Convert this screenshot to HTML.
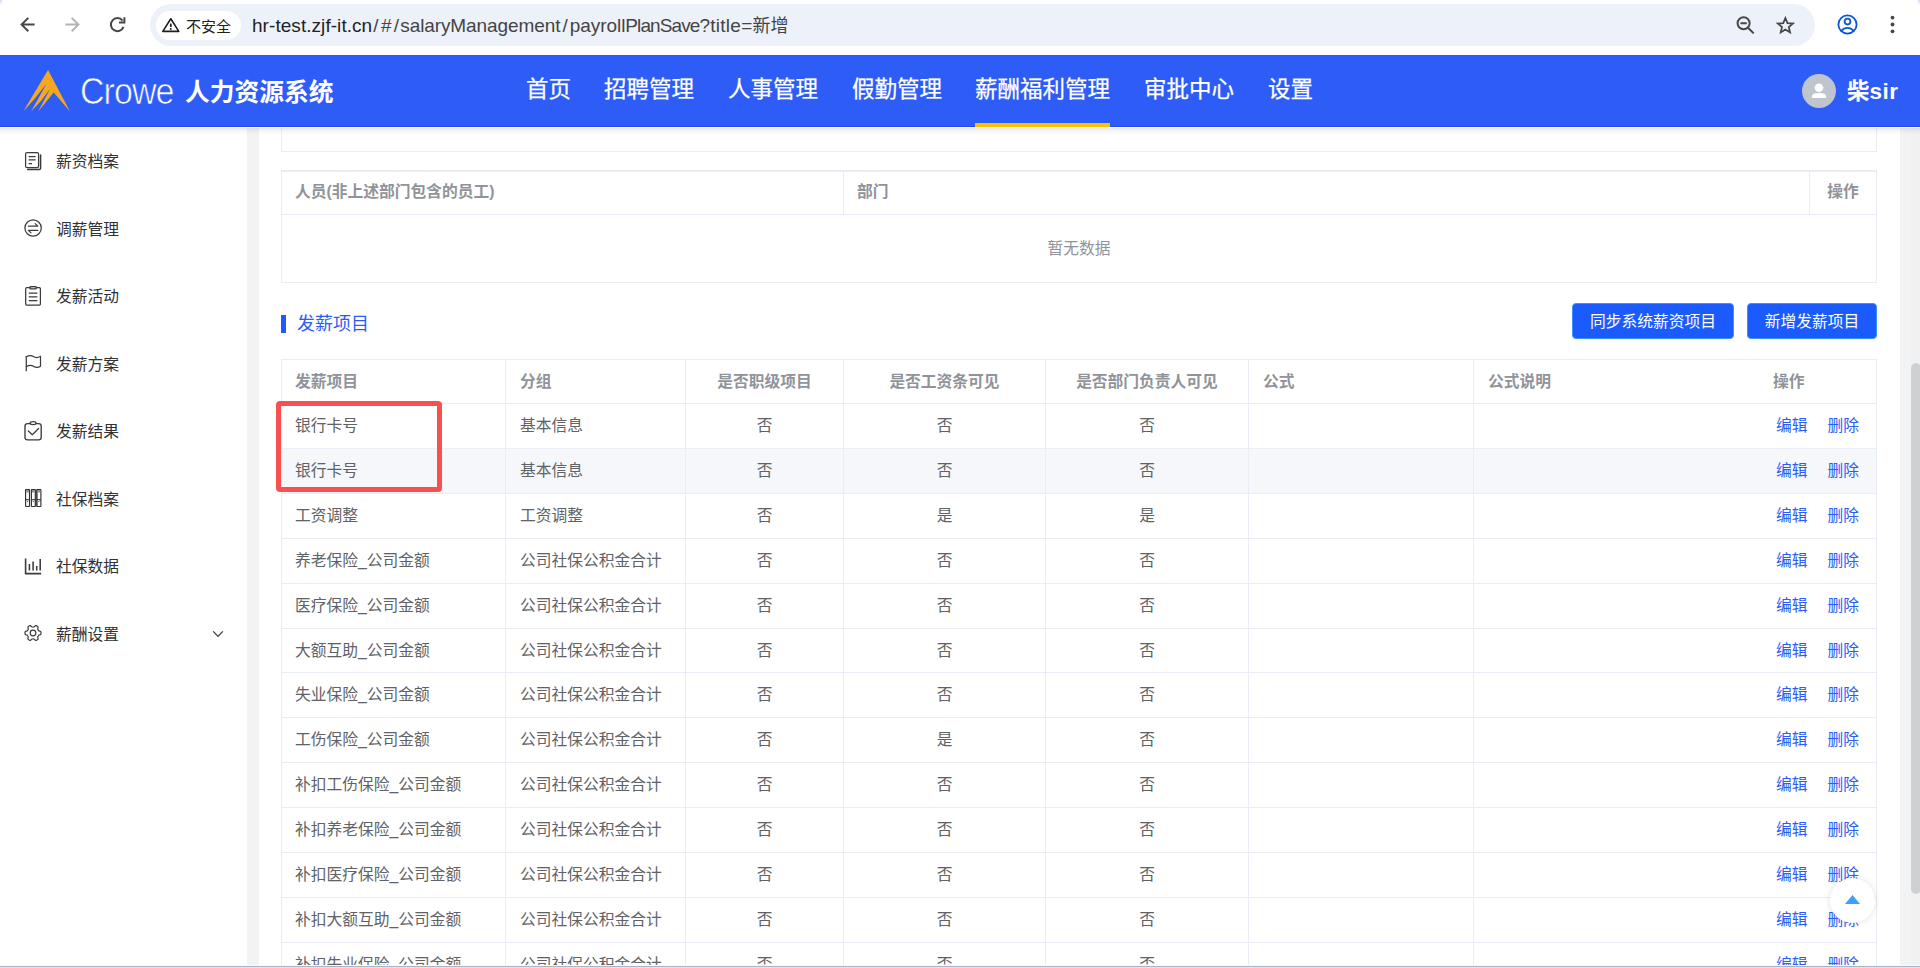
<!DOCTYPE html>
<html lang="zh-CN">
<head>
<meta charset="utf-8">
<title>人力资源系统</title>
<style>
*{box-sizing:border-box;margin:0;padding:0}
html,body{width:1920px;height:968px;overflow:hidden;background:#fff}
body{font-family:"Liberation Sans","Noto Sans CJK SC",sans-serif;position:relative;color:#606266;-webkit-font-smoothing:antialiased}
.abs{position:absolute}
svg{position:absolute;overflow:visible}
/* ---------- browser chrome ---------- */
#chrome{position:absolute;left:0;top:0;width:1920px;height:55px;background:#fff}
.cn{position:absolute;top:0;width:2px;height:5px;background:linear-gradient(#cfe0fc,#dbe8fd 45%,#fff)}
#pill{position:absolute;left:150px;top:4px;width:1665px;height:42px;border-radius:21px;background:#edf2fa}
#chip{position:absolute;left:156px;top:11px;width:85px;height:29px;border-radius:15px;background:#fff}
#chiptxt{position:absolute;left:186px;top:16px;font-size:15px;line-height:22px;color:#1f1f1f;white-space:nowrap}
#url{position:absolute;left:252px;top:13px;font-size:19px;line-height:26px;color:#1f1f1f;white-space:nowrap;letter-spacing:0}
#url i{font-style:normal;color:#444}
#url b{font-weight:400;font-size:18px;letter-spacing:0;color:#444}
/* ---------- app header ---------- */
#hdr{position:absolute;left:0;top:55px;width:1920px;height:72px;background:#2e5cf6;border-bottom:1px solid #2447f2;z-index:5}
#tshadow{position:absolute;left:0;top:127px;width:1920px;height:8px;border-top:1px solid #fffefa;background:linear-gradient(to bottom,rgba(0,0,0,.078),rgba(0,0,0,.03) 50%,rgba(0,0,0,0));z-index:6;pointer-events:none}
#crowe{position:absolute;left:80px;top:17px;font-size:36px;line-height:40px;color:#fff;white-space:nowrap;transform-origin:0 50%;transform:scaleX(.945);letter-spacing:-1px;-webkit-text-stroke:.7px #2e5cf6}
#sys{position:absolute;left:185px;top:19.5px;font-size:24.75px;line-height:36px;font-weight:700;color:#fff;white-space:nowrap}
.nav{position:absolute;top:18px;font-size:22.5px;line-height:34px;color:#fff;white-space:nowrap;-webkit-text-stroke:.25px #fff}
#navline{position:absolute;left:975px;top:68px;width:135px;height:4px;background:#fdc100}
#avatar{position:absolute;left:1802px;top:19px;width:34px;height:34px;border-radius:50%;background:#c0c4cc}
#uname{position:absolute;left:1847px;top:20px;font-size:22.5px;line-height:34px;font-weight:700;color:#fff;white-space:nowrap}
/* ---------- body layout ---------- */
#side{position:absolute;left:0;top:127px;width:247px;height:839px;background:#fff}
#gapl{position:absolute;left:247px;top:127px;width:12px;height:839px;background:#f2f3f5}
#gapr{position:absolute;left:1900px;top:127px;width:11px;height:839px;background:#f2f3f5}
#sbar{position:absolute;left:1911px;top:127px;width:9px;height:839px;background:#f1f1f1}
#thumb{position:absolute;left:0;top:236px;width:10px;height:531px;border-radius:5px;background:#cfd0d2}
#botline{position:absolute;left:0;top:965px;width:1920px;height:3px;background:#e0e3f3;border-top:1px solid #fbfbfc;z-index:9}
#botline:before{content:"";position:absolute;left:0;top:0;width:1920px;height:1px;background:#b1b2bf}
/* ---------- content ---------- */
#content{position:absolute;left:0;top:0;width:1900px;height:966px;overflow:hidden}
#box0{position:absolute;left:281px;top:100px;width:1596px;height:52px;border:1px solid #eaedf5}
table{position:absolute;border-collapse:separate;border-spacing:0;table-layout:fixed;font-size:15.75px}
#t1{left:281px;top:170px;width:1596px;border-left:1px solid #eaedf5;border-top:2px solid #e8ebf5}
#t2{left:281px;top:359px;width:1596px;border-left:1px solid #eaedf5;border-top:1px solid #eaedf5}
th,td{border-right:1px solid #eaedf5;border-bottom:1px solid #eaedf5;padding:0 0 0 13px;text-align:left;white-space:nowrap;overflow:hidden;vertical-align:middle}
th{font-weight:700;color:#909399;height:44px;line-height:43px}
#t1 th{height:43px;line-height:38px;padding-bottom:2px}
td{color:#606266;height:45px;line-height:44px;font-weight:400}
th.c,td.c{text-align:center;padding:0}
th.nb,td.nb{border-right:none}
#t2 th:nth-child(2),#t2 td:nth-child(2),#t2 th:nth-child(6),#t2 th:nth-child(7){padding-left:14px}
td.empty{height:68px;line-height:66px;text-align:center;color:#909399;padding:0}
tr.hov td{background:#f5f7fa}
tr.s44 td{height:44px;line-height:43px}
th.op{padding-left:12px}
td.op{padding-left:15px}
.lk{color:#2d5bf5}
.l2{margin-left:20px}
#bar{position:absolute;left:281px;top:315px;width:5px;height:18px;background:#1e5aff}
#stitle{position:absolute;left:297px;top:310px;font-size:18px;line-height:28px;color:#2d5bf5;white-space:nowrap}
.btn{position:absolute;top:303px;height:36px;border-radius:4px;background:#1b5bfd;border:1px solid #3d90ff;color:#fff;font-size:15.75px;line-height:35px;text-align:center;white-space:nowrap}
#redbox{position:absolute;left:276px;top:401px;width:166px;height:91px;border:5px solid #f85050;border-radius:4px}
#totop{position:absolute;left:1830px;top:877.5px;width:45px;height:45px;border-radius:50%;background:#fff;box-shadow:0 0 7px rgba(0,0,0,.12)}
.mi{position:absolute;left:56px;font-size:15.75px;line-height:24px;color:#303133;white-space:nowrap}
</style>
</head>
<body>
<!-- browser chrome -->
<div id="chrome">
  <div class="cn" style="left:0"></div><div class="cn" style="left:1918px"></div>
  <div id="pill"></div>
  <div id="chip"></div>
  <div id="chiptxt">不安全</div>
  <div id="url"><span style="letter-spacing:.055px">hr-test.zjf-it.cn</span><i style="letter-spacing:2.325px;padding-left:1.1px;margin-right:-1.1px">/#/</i><i style="letter-spacing:-0.115px">salary</i><i style="letter-spacing:-0.091px">Management</i><i style="padding:0 2.06px">/</i><i style="letter-spacing:-0.055px">payroll</i><i style="letter-spacing:-0.905px">PlanSave</i><i style="letter-spacing:0.267px">?title=</i><b>新增</b></div>
</div>

<!-- app header -->
<div id="hdr">
  <div id="crowe">Crowe</div>
  <div id="sys">人力资源系统</div>
  <div class="nav" style="left:526px">首页</div>
  <div class="nav" style="left:604px">招聘管理</div>
  <div class="nav" style="left:728px">人事管理</div>
  <div class="nav" style="left:852px">假勤管理</div>
  <div class="nav" style="left:975px">薪酬福利管理</div>
  <div class="nav" style="left:1144px">审批中心</div>
  <div class="nav" style="left:1268px">设置</div>
  <div id="navline"></div>
  <div id="avatar"></div>
  <div id="uname">柴<span style="letter-spacing:.5px">sir</span></div>
</div>

<!-- sidebar -->
<div id="side">
  <div class="mi" style="top:23px">薪资档案</div>
  <div class="mi" style="top:91px">调薪管理</div>
  <div class="mi" style="top:158px">发薪活动</div>
  <div class="mi" style="top:226px">发薪方案</div>
  <div class="mi" style="top:293px">发薪结果</div>
  <div class="mi" style="top:361px">社保档案</div>
  <div class="mi" style="top:428px">社保数据</div>
  <div class="mi" style="top:496px">薪酬设置</div>
</div>
<div id="gapl"></div>
<div id="gapr"></div>
<div id="sbar"><div id="thumb"></div></div>

<div id="tshadow"></div>
<!-- content -->
<div id="content">
<div id="box0"></div>
<table id="t1" cellspacing="0" cellpadding="0">
<colgroup><col style="width:562px"><col style="width:966px"><col style="width:67px"></colgroup>
<thead><tr><th>人员(非上述部门包含的员工)</th><th>部门</th><th class="c">操作</th></tr></thead>
<tbody><tr><td colspan="3" class="empty">暂无数据</td></tr></tbody>
</table>
<div id="bar"></div><div id="stitle">发薪项目</div>
<div class="btn" style="left:1572px;width:162px">同步系统薪资项目</div>
<div class="btn" style="left:1747px;width:130px">新增发薪项目</div>
<table id="t2" cellspacing="0" cellpadding="0">
<colgroup><col style="width:224px"><col style="width:180px"><col style="width:158px"><col style="width:202px"><col style="width:203px"><col style="width:225px"><col style="width:287px"><col style="width:116px"></colgroup>
<thead><tr><th>发薪项目</th><th>分组</th><th class="c">是否职级项目</th><th class="c">是否工资条可见</th><th class="c">是否部门负责人可见</th><th>公式</th><th class="nb">公式说明</th><th class="op">操作</th></tr></thead>
<tbody>
<tr><td>银行卡号</td><td>基本信息</td><td class="c">否</td><td class="c">否</td><td class="c">否</td><td></td><td class="nb"></td><td class="op"><span class="lk">编辑</span><span class="lk l2">删除</span></td></tr>
<tr class="hov"><td>银行卡号</td><td>基本信息</td><td class="c">否</td><td class="c">否</td><td class="c">否</td><td></td><td class="nb"></td><td class="op"><span class="lk">编辑</span><span class="lk l2">删除</span></td></tr>
<tr><td>工资调整</td><td>工资调整</td><td class="c">否</td><td class="c">是</td><td class="c">是</td><td></td><td class="nb"></td><td class="op"><span class="lk">编辑</span><span class="lk l2">删除</span></td></tr>
<tr><td>养老保险_公司金额</td><td>公司社保公积金合计</td><td class="c">否</td><td class="c">否</td><td class="c">否</td><td></td><td class="nb"></td><td class="op"><span class="lk">编辑</span><span class="lk l2">删除</span></td></tr>
<tr><td>医疗保险_公司金额</td><td>公司社保公积金合计</td><td class="c">否</td><td class="c">否</td><td class="c">否</td><td></td><td class="nb"></td><td class="op"><span class="lk">编辑</span><span class="lk l2">删除</span></td></tr>
<tr class="s44"><td>大额互助_公司金额</td><td>公司社保公积金合计</td><td class="c">否</td><td class="c">否</td><td class="c">否</td><td></td><td class="nb"></td><td class="op"><span class="lk">编辑</span><span class="lk l2">删除</span></td></tr>
<tr><td>失业保险_公司金额</td><td>公司社保公积金合计</td><td class="c">否</td><td class="c">否</td><td class="c">否</td><td></td><td class="nb"></td><td class="op"><span class="lk">编辑</span><span class="lk l2">删除</span></td></tr>
<tr><td>工伤保险_公司金额</td><td>公司社保公积金合计</td><td class="c">否</td><td class="c">是</td><td class="c">否</td><td></td><td class="nb"></td><td class="op"><span class="lk">编辑</span><span class="lk l2">删除</span></td></tr>
<tr><td>补扣工伤保险_公司金额</td><td>公司社保公积金合计</td><td class="c">否</td><td class="c">否</td><td class="c">否</td><td></td><td class="nb"></td><td class="op"><span class="lk">编辑</span><span class="lk l2">删除</span></td></tr>
<tr><td>补扣养老保险_公司金额</td><td>公司社保公积金合计</td><td class="c">否</td><td class="c">否</td><td class="c">否</td><td></td><td class="nb"></td><td class="op"><span class="lk">编辑</span><span class="lk l2">删除</span></td></tr>
<tr><td>补扣医疗保险_公司金额</td><td>公司社保公积金合计</td><td class="c">否</td><td class="c">否</td><td class="c">否</td><td></td><td class="nb"></td><td class="op"><span class="lk">编辑</span><span class="lk l2">删除</span></td></tr>
<tr><td>补扣大额互助_公司金额</td><td>公司社保公积金合计</td><td class="c">否</td><td class="c">否</td><td class="c">否</td><td></td><td class="nb"></td><td class="op"><span class="lk">编辑</span><span class="lk l2">删除</span></td></tr>
<tr><td>补扣失业保险_公司金额</td><td>公司社保公积金合计</td><td class="c">否</td><td class="c">否</td><td class="c">否</td><td></td><td class="nb"></td><td class="op"><span class="lk">编辑</span><span class="lk l2">删除</span></td></tr>
</tbody></table>
<div id="redbox"></div>
<div id="totop"><svg width="15" height="9" viewBox="0 0 15 9" style="left:15px;top:17.4px"><path d="M7.5 0L15 9H0z" fill="#409eff"/></svg></div>
</div>

<svg id="icons" width="1920" height="968" viewBox="0 0 1920 968" style="left:0;top:0;z-index:8;pointer-events:none" fill="none" stroke-linecap="round" stroke-linejoin="round">
<g stroke="#474747" stroke-width="2" stroke-linecap="butt" stroke-linejoin="miter">
<path d="M34.6 24.6H22.4M28.3 17.9L21.6 24.6l6.7 6.7"/>
</g>
<g stroke="#b4b4b4" stroke-width="2" stroke-linecap="butt" stroke-linejoin="miter">
<path d="M65.4 24.6H77.6M71.7 17.9L78.4 24.6l-6.7 6.7"/>
</g>
<g stroke="#474747" stroke-width="2" stroke-linecap="butt" stroke-linejoin="miter">
<path d="M122.52 20.60A6.5 6.5 0 1 0 123.51 26.82"/>
<path d="M124.4 17.2V22.6H119"/>
</g>
<path d="M170.8 18.8L178.8 31.4H162.8Z" stroke="#1f1f1f" stroke-width="1.6" stroke-linejoin="round"/>
<path d="M170.8 23.6v3.4" stroke="#1f1f1f" stroke-width="1.7" stroke-linecap="butt"/><circle cx="170.8" cy="29" r="0.95" fill="#1f1f1f"/>
<g stroke="#474747" stroke-width="2" stroke-linecap="butt">
<circle cx="1743.6" cy="23.3" r="6"/><path d="M1740.4 23.3h6.4M1748 27.7l5.7 5.7"/>
</g>
<path d="M1785.40 18.00L1787.52 23.09L1793.01 23.53L1788.82 27.11L1790.10 32.47L1785.40 29.60L1780.70 32.47L1781.98 27.11L1777.79 23.53L1783.28 23.09Z" stroke="#474747" stroke-width="1.75" stroke-linejoin="miter"/>
<g stroke="#0b57d0" stroke-width="1.8">
<circle cx="1847.5" cy="24.5" r="9.1"/><circle cx="1847.5" cy="21.6" r="2.9"/>
<path d="M1841.3 31.1C1843 28.6 1845.2 27.9 1847.5 27.9S1852 28.6 1853.7 31.1"/>
</g>
<circle cx="1892.5" cy="17.6" r="1.9" fill="#474747"/>
<circle cx="1892.5" cy="24.5" r="1.9" fill="#474747"/>
<circle cx="1892.5" cy="31.3" r="1.9" fill="#474747"/>
<path d="M48.05 69.9L23.2 111.5Q35.9 98.3 46.5 83.7L31.1 111.5Q42 101 50.2 88.8L38.2 111.5L53.7 92.6L70 111.5Z" fill="#f5a81e"/>
<circle cx="1819" cy="87.8" r="4.3" fill="#fff"/><path d="M1811.9 98.1v-1.6Q1811.9 93.1 1819 93.1T1826.1 96.5v1.6z" fill="#fff"/>
<g stroke="#3a3b3d" stroke-width="1.25">
<rect x="25.6" y="152.6" width="13" height="15" rx="1.6"/>
<path d="M40.6 155v13.2q0 1.4-1.4 1.4H27.6" stroke-width="1.5"/>
<path d="M28.6 156.6h7M28.6 159.8h7M28.6 163.5h3.4" stroke-linecap="butt"/>
<circle cx="33.1" cy="228" r="8.2"/>
<path d="M28.4 226.2h9.4l-2.6-2.6M37.8 230.3h-9.4l2.6 2.6" stroke-width="1.2"/>
<rect x="25.7" y="287.7" width="14.7" height="17.3" rx="1"/>
<rect x="30" y="286.7" width="6.2" height="2.2" rx=".5" fill="#d8d8d9"/>
<path d="M28.8 293.1h8.6M28.8 296.8h8.6M28.8 300.5h8.6" stroke-linecap="butt"/>
<path d="M26.3 356v15.2" stroke-linecap="butt"/>
<path d="M26.3 356.8C29 355.2 31.6 355.4 33.4 356.6S38 357.8 40.5 356.3V366.2C38 367.8 35.2 367.4 33.4 366.2S29 365 26.3 366.6"/>
<rect x="25" y="423.6" width="16.2" height="16.3" rx="2.6" stroke-width="1.35"/>
<ellipse cx="33.1" cy="423.1" rx="3" ry="1.6" fill="#fff"/>
<path d="M28.3 431l4 3.7 6.3-6.2"/>
<rect x="35.3" y="489.4" width="1.9" height="17.2" fill="#6e6f72" stroke="none"/>
<rect x="25.6" y="489.6" width="3.9" height="16.9" rx=".5" stroke="#2f3033" stroke-width="1.15" fill="#fff"/>
<rect x="26.2" y="490.2" width="2.7" height="2.3" fill="#8f9093" stroke="none"/>
<path d="M25.6 499.7h3.9" stroke="#2f3033" stroke-width="1.1" stroke-linecap="butt"/>
<circle cx="27.55" cy="501.6" r=".6" fill="#4a4b4e" stroke="none"/>
<rect x="31.4" y="489.6" width="3.9" height="16.9" rx=".5" stroke="#2f3033" stroke-width="1.15" fill="#fff"/>
<rect x="32.0" y="490.2" width="2.7" height="2.3" fill="#8f9093" stroke="none"/>
<path d="M31.4 499.7h3.9" stroke="#2f3033" stroke-width="1.1" stroke-linecap="butt"/>
<circle cx="33.35" cy="501.6" r=".6" fill="#4a4b4e" stroke="none"/>
<rect x="37.0" y="489.6" width="3.9" height="16.9" rx=".5" stroke="#2f3033" stroke-width="1.15" fill="#fff"/>
<rect x="37.6" y="490.2" width="2.7" height="2.3" fill="#8f9093" stroke="none"/>
<path d="M37.0 499.7h3.9" stroke="#2f3033" stroke-width="1.1" stroke-linecap="butt"/>
<circle cx="38.95" cy="501.6" r=".6" fill="#4a4b4e" stroke="none"/>
<path d="M25.6 558.4v15.2h15.6" stroke-linecap="butt" stroke-linejoin="miter" stroke-width="1.6"/>
<path d="M29.4 564v6.6M33.1 561.5v9.1M36.7 566v4.6M40.2 559v11.6" stroke-linecap="butt" stroke-width="1.55"/>
<path d="M41.00 633.00L40.99 633.35L40.97 633.70L40.93 634.04L40.73 634.36L40.26 634.61L39.76 634.81L39.26 634.97L38.78 635.10L38.54 635.30L38.44 635.54L38.32 635.77L38.20 636.00L38.06 636.22L37.91 636.44L37.76 636.65L37.71 636.95L37.84 637.43L37.95 637.95L38.03 638.49L38.05 639.01L37.87 639.35L37.59 639.55L37.30 639.75L37.00 639.93L36.69 640.10L36.38 640.25L36.06 640.39L35.68 640.38L35.24 640.10L34.81 639.76L34.42 639.40L34.07 639.06L33.78 638.95L33.52 638.98L33.26 638.99L33.00 639.00L32.74 638.99L32.48 638.98L32.22 638.95L31.93 639.06L31.58 639.40L31.19 639.76L30.76 640.10L30.32 640.38L29.94 640.39L29.62 640.25L29.31 640.10L29.00 639.93L28.70 639.75L28.41 639.55L28.13 639.35L27.95 639.01L27.97 638.49L28.05 637.95L28.16 637.43L28.29 636.95L28.24 636.65L28.09 636.44L27.94 636.22L27.80 636.00L27.68 635.77L27.56 635.54L27.46 635.30L27.22 635.10L26.74 634.97L26.24 634.81L25.74 634.61L25.27 634.36L25.07 634.04L25.03 633.70L25.01 633.35L25.00 633.00L25.01 632.65L25.03 632.30L25.07 631.96L25.27 631.64L25.74 631.39L26.24 631.19L26.74 631.03L27.22 630.90L27.46 630.70L27.56 630.46L27.68 630.23L27.80 630.00L27.94 629.78L28.09 629.56L28.24 629.35L28.29 629.05L28.16 628.57L28.05 628.05L27.97 627.51L27.95 626.99L28.13 626.65L28.41 626.45L28.70 626.25L29.00 626.07L29.31 625.90L29.62 625.75L29.94 625.61L30.32 625.62L30.76 625.90L31.19 626.24L31.58 626.60L31.93 626.94L32.22 627.05L32.48 627.02L32.74 627.01L33.00 627.00L33.26 627.01L33.52 627.02L33.78 627.05L34.07 626.94L34.42 626.60L34.81 626.24L35.24 625.90L35.68 625.62L36.06 625.61L36.38 625.75L36.69 625.90L37.00 626.07L37.30 626.25L37.59 626.45L37.87 626.65L38.05 626.99L38.03 627.51L37.95 628.05L37.84 628.57L37.71 629.05L37.76 629.35L37.91 629.56L38.06 629.78L38.20 630.00L38.32 630.23L38.44 630.46L38.54 630.70L38.78 630.90L39.26 631.03L39.76 631.19L40.26 631.39L40.73 631.64L40.93 631.96L40.97 632.30L40.99 632.65Z" stroke-width="1.2"/>
<circle cx="33" cy="633" r="2.8" stroke-width="1.2"/>
<path d="M213.2 631.4l4.8 5 4.8-5" stroke-width="1.3" stroke-linecap="butt" stroke-linejoin="miter"/>
</g>
</svg>

<div id="botline"></div>
</body>
</html>
